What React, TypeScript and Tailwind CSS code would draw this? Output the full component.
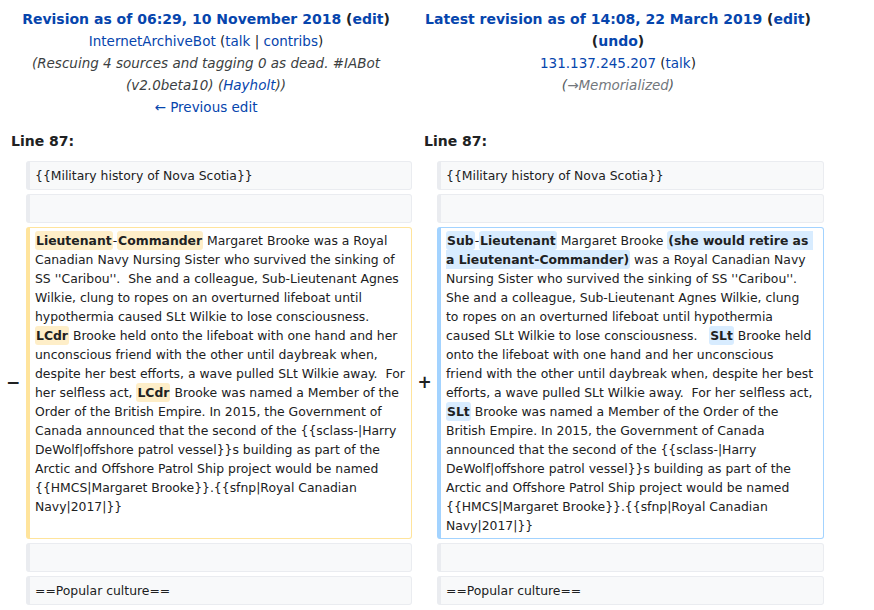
import React from "react";

const link = "text-[#0645ad]";

const Del = ({ children }: { children: React.ReactNode }) => (
  <span className="font-bold bg-[#feeec8] rounded-[3px] px-[1px] py-[2px]">{children}</span>
);

const Ins = ({ children }: { children: React.ReactNode }) => (
  <span className="font-bold bg-[#d8ecff] rounded-[3px] px-[1px] py-[2px]">{children}</span>
);

const Context = ({ text }: { text?: string }) => (
  <div className="min-h-[29px] bg-[#f8f9fa] border border-[#eaecf0] border-l-4 rounded-[3px] pl-[5px] pr-[6px] py-[4px] leading-[19px] whitespace-pre-wrap">
    {text}
  </div>
);

const Marker = ({ sign }: { sign: string }) => (
  <div className="flex items-center justify-center font-bold text-[17px] text-[#202122]">{sign}</div>
);

const App = () => {
  return (
    <div
      className="w-[874px] h-[610px] bg-white text-[#202122] overflow-hidden"
      style={{ fontFamily: "'DejaVu Sans', sans-serif" }}
    >
      {/* revision headers */}
      <div className="flex pt-[8px] text-[13.5px] leading-[22px] text-center">
        <div className="w-[412px]">
          <div className="font-bold text-[14px]">
            <span className={link}>Revision as of 06:29, 10 November 2018</span> (<span className={link}>edit</span>)
          </div>
          <div>
            <span className={link}>InternetArchiveBot</span> (<span className={link}>talk</span> |{" "}
            <span className={link}>contribs</span>)
          </div>
          <div className="italic text-[#3c3f42] px-[22px]">
            (Rescuing 4 sources and tagging 0 as dead. #IABot (v2.0beta10) (<span className={link}>Hayholt</span>))
          </div>
          <div className={link}>← Previous edit</div>
        </div>
        <div className="w-[412px]">
          <div className="font-bold text-[14px] px-[8px]">
            <span className={link}>Latest revision as of 14:08, 22 March 2019</span> (<span className={link}>edit</span>) (
            <span className={link}>undo</span>)
          </div>
          <div>
            <span className={link}>131.137.245.207</span> (<span className={link}>talk</span>)
          </div>
          <div className="italic text-[#54595d]">
            (<span className="text-[#72777d]">→Memorialized</span>)
          </div>
        </div>
      </div>

      {/* diff table */}
      <div className="grid grid-cols-[26px_386px_25px_387px] gap-y-[4px] text-[12.4px] mt-[14px]">
        <div className="col-span-2 pl-[11px] font-bold text-[14px] leading-[18px] pb-[7px]">Line 87:</div>
        <div className="col-span-2 pl-[12px] font-bold text-[14px] leading-[18px] pb-[7px]">Line 87:</div>

        <div />
        <Context text="{{Military history of Nova Scotia}}" />
        <div />
        <Context text="{{Military history of Nova Scotia}}" />

        <div />
        <Context />
        <div />
        <Context />

        <Marker sign="−" />
        <div className="bg-white border border-[#ffe49c] border-l-4 rounded-[3px] pl-[5px] pr-[4px] py-[3px] leading-[19px] whitespace-pre-wrap">
          <Del>Lieutenant</Del>-<Del>Commander</Del> Margaret Brooke was a Royal Canadian Navy Nursing Sister who survived
          the sinking of SS ''Caribou''.{"  "}She and a colleague, Sub-Lieutenant Agnes Wilkie, clung to ropes on an
          overturned lifeboat until hypothermia caused SLt Wilkie to lose consciousness.{"  "}
          <Del>LCdr</Del> Brooke held onto the lifeboat with one hand and her unconscious friend with the other until
          daybreak when, despite her best efforts, a wave pulled SLt Wilkie away.{"  "}For her selfless act, <Del>LCdr</Del>{" "}
          Brooke was named a Member of the Order of the British Empire. In 2015, the Government of Canada announced that
          the second of the {"{{sclass-|Harry DeWolf|offshore patrol vessel}}"}s building as part of the Arctic and
          Offshore Patrol Ship project would be named {"{{HMCS|Margaret Brooke}}.{{sfnp|Royal Canadian Navy|2017|}}"}
        </div>
        <Marker sign="+" />
        <div className="bg-white border border-[#a3d3ff] border-l-4 rounded-[3px] pl-[5px] pr-[6px] py-[3px] leading-[19px] whitespace-pre-wrap">
          <Ins>Sub</Ins>-<Ins>Lieutenant</Ins> Margaret Brooke <Ins>(she would retire as a Lieutenant-Commander)</Ins> was
          a Royal Canadian Navy Nursing Sister who survived the sinking of SS ''Caribou''.{"  "}She and a colleague,
          Sub-Lieutenant Agnes Wilkie, clung{"\n"}to ropes on an overturned lifeboat until hypothermia caused SLt Wilkie to
          lose consciousness.{"   "}
          <Ins>SLt</Ins> Brooke held onto the lifeboat with one hand and her unconscious{"\n"}friend with the other until
          daybreak when, despite her best efforts, a wave pulled SLt Wilkie away.{"  "}For her selfless act,{" "}
          <Ins>SLt</Ins> Brooke was named a Member of the Order of the British Empire. In 2015, the Government of Canada
          announced that the second of the {"{{sclass-|Harry DeWolf|offshore patrol vessel}}"}s building as part of the
          Arctic and Offshore Patrol Ship project would be named{" "}
          {"{{HMCS|Margaret Brooke}}.{{sfnp|Royal Canadian Navy|2017|}}"}
        </div>

        <div />
        <Context />
        <div />
        <Context />

        <div />
        <Context text="==Popular culture==" />
        <div />
        <Context text="==Popular culture==" />
      </div>
    </div>
  );
};

export default App;
